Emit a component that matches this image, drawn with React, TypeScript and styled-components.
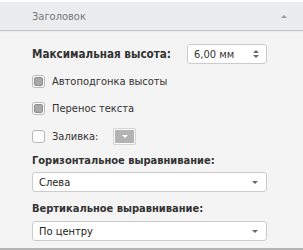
import React from 'react';
import styled, { createGlobalStyle } from 'styled-components';

const GlobalStyle = createGlobalStyle`
  html, body {
    margin: 0;
    padding: 0;
    background: #f4f4f4;
  }
  body {
    font-family: 'DejaVu Sans Condensed', 'DejaVu Sans', Verdana, sans-serif;
    font-size: 11px;
    color: #333;
  }
`;

export const Panel = styled.div`
  width: 303px;
  height: 250px;
  box-sizing: border-box;
  background: #f4f4f4;
  border-top: 2px solid #fff;
  border-bottom: 2px solid #b4b4b4;
  display: flex;
  flex-direction: column;
`;

export const Header = styled.div`
  display: flex;
  align-items: center;
  justify-content: space-between;
  height: 28px;
  padding: 0 16px 0 32px;
  background: #ebecee;
  border-bottom: 1px solid #c4c4c4;
  box-shadow: 0 1px 2px rgba(0, 0, 0, 0.05);
  color: #777;
  font-size: 11px;
`;

export const Caret = styled.span<{ $dir: 'up' | 'down'; $color?: string }>`
  width: 0;
  height: 0;
  border-left: 3px solid transparent;
  border-right: 3px solid transparent;
  ${(p) =>
    p.$dir === 'up'
      ? `border-bottom: 3px solid ${p.$color || '#999'};`
      : `border-top: 3px solid ${p.$color || '#666'};`}
`;

export const Body = styled.div`
  display: flex;
  flex-direction: column;
  padding: 13px 36px 0 32px;
`;

export const Row = styled.div<{ $mt?: number; $h?: number }>`
  display: flex;
  align-items: center;
  height: ${(p) => p.$h ?? 14}px;
  margin-top: ${(p) => p.$mt ?? 0}px;
`;

export const Label = styled.div<{ $size?: number }>`
  font-weight: bold;
  font-size: ${(p) => p.$size ?? 11}px;
  color: #333;
`;

export const NumberBox = styled.div`
  margin-left: auto;
  width: 80px;
  height: 20px;
  box-sizing: border-box;
  border: 1px solid #ccc;
  border-radius: 3px;
  background: #fff;
  display: flex;
  align-items: center;
  justify-content: space-between;
  padding: 0 7px 0 6px;
  color: #333;
`;

export const Spin = styled.div`
  display: flex;
  flex-direction: column;
  gap: 2px;
`;

export const CheckRow = styled.label`
  display: flex;
  align-items: center;
  gap: 7px;
  color: #333;
`;

export const Box = styled.span<{ $checked?: boolean }>`
  width: 13px;
  height: 13px;
  box-sizing: border-box;
  border: 1px solid #b8b8b8;
  border-radius: 3px;
  background: #fff;
  display: flex;
  align-items: center;
  justify-content: center;
  &::after {
    content: '';
    display: ${(p) => (p.$checked ? 'block' : 'none')};
    width: 9px;
    height: 9px;
    box-sizing: border-box;
    border-radius: 2px;
    background: #a9a9a9;
    border: 1px solid #8c8c8c;
  }
`;

export const ColorButton = styled.span`
  margin-left: 15px;
  width: 23px;
  height: 17px;
  box-sizing: border-box;
  border: 1px solid #d4d4d4;
  border-radius: 2px;
  background: #b3b3b3;
  box-shadow: inset 0 0 0 1px #fff;
  display: flex;
  align-items: center;
  justify-content: center;
`;

export const Select = styled.div<{ $mt?: number }>`
  height: 20px;
  margin-top: ${(p) => p.$mt ?? 0}px;
  box-sizing: border-box;
  border: 1px solid #ccc;
  border-radius: 3px;
  background: #fff;
  display: flex;
  align-items: center;
  justify-content: space-between;
  padding: 0 8px 0 6px;
  color: #222;
`;

export default function App() {
  return (
    <>
      <GlobalStyle />
      <Panel>
        <Header>
          <span>Заголовок</span>
          <Caret $dir="up" />
        </Header>
        <Body>
          <Row $h={20}>
            <Label $size={11.6}>Максимальная высота:</Label>
            <NumberBox>
              <span>6,00 мм</span>
              <Spin>
                <Caret $dir="up" $color="#666" />
                <Caret $dir="down" />
              </Spin>
            </NumberBox>
          </Row>
          <Row $mt={10}>
            <CheckRow>
              <Box $checked />
              Автоподгонка высоты
            </CheckRow>
          </Row>
          <Row $mt={13}>
            <CheckRow>
              <Box $checked />
              Перенос текста
            </CheckRow>
          </Row>
          <Row $mt={13} $h={17}>
            <CheckRow>
              <Box />
              Заливка:
            </CheckRow>
            <ColorButton>
              <Caret $dir="down" $color="#fff" />
            </ColorButton>
          </Row>
          <Row $mt={8}>
            <Label>Горизонтальное выравнивание:</Label>
          </Row>
          <Select $mt={5}>
            <span>Слева</span>
            <Caret $dir="down" />
          </Select>
          <Row $mt={9}>
            <Label>Вертикальное выравнивание:</Label>
          </Row>
          <Select $mt={6}>
            <span>По центру</span>
            <Caret $dir="down" />
          </Select>
        </Body>
      </Panel>
    </>
  );
}
